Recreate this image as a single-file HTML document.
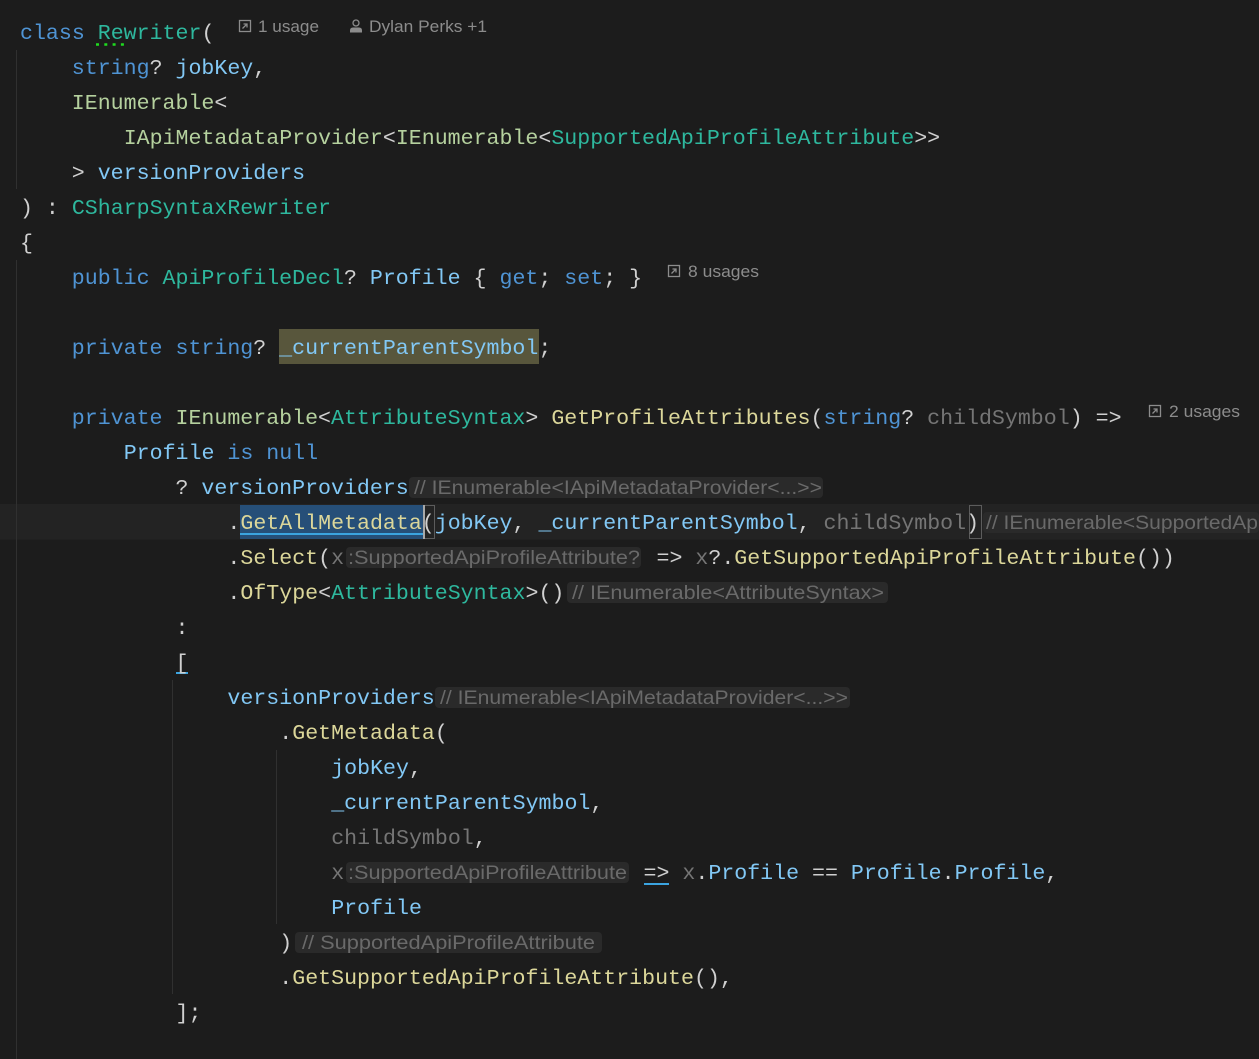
<!DOCTYPE html>
<html><head><meta charset="utf-8"><style>
html,body{margin:0;padding:0;background:#1c1c1c;width:1259px;height:1059px;overflow:hidden}
svg{display:block;position:absolute;left:0;top:0;filter:blur(.35px)}
.m{font-family:"Liberation Mono",monospace;font-size:21.6px;fill:#d0d0d0;white-space:pre;transform:translateY(-1.2px)}
.h{font-family:"Liberation Sans",sans-serif;font-size:19.5px;fill:#6a6a6a;white-space:pre}
.c{font-family:"Liberation Sans",sans-serif;font-size:17px;fill:#8c8c8c;white-space:pre}
.k{fill:#4f94d4}.t{fill:#2eb89e}.i{fill:#b5d19e}.p{fill:#82c8f5}.f{fill:#dcd79a}.d{fill:#757575}.w{fill:#d0d0d0}
.b{fill:#2a2a2a}.g{stroke:#303030;stroke-width:1}
</style></head><body>
<svg width="1259" height="1059" viewBox="0 0 1259 1059" xmlns="http://www.w3.org/2000/svg">
<rect width="1259" height="1059" fill="#1c1c1c"/>
<rect x="0" y="504" width="1259" height="35.500" fill="#232323"/>
<rect x="279" y="329" width="260" height="35" fill="#58563c"/>
<rect x="240" y="505" width="183" height="34" fill="#264f78"/>
<rect x="240" y="533" width="183" height="2" fill="#3ba4e0"/>
<rect x="423.500" y="505.500" width="11" height="33" fill="none" stroke="#5c5c5c"/>
<rect x="423" y="505" width="2" height="34" fill="#a8a8a8"/>
<rect x="969.500" y="505.500" width="12" height="33" fill="none" stroke="#5c5c5c"/>
<line class="g" x1="16.500" y1="50" x2="16.500" y2="189"/>
<line class="g" x1="16.500" y1="260" x2="16.500" y2="1059"/>
<line class="g" x1="172.500" y1="680" x2="172.500" y2="994"/>
<line class="g" x1="276.500" y1="750" x2="276.500" y2="924"/>
<rect class="b" x="409" y="477" width="414" height="21" rx="4"/>
<rect class="b" x="983" y="512" width="276" height="21" rx="4"/>
<rect class="b" x="346" y="547" width="295" height="21" rx="4"/>
<rect class="b" x="567" y="582" width="321" height="21" rx="4"/>
<rect class="b" x="435" y="687" width="415" height="21" rx="4"/>
<rect class="b" x="346" y="862" width="283" height="21" rx="4"/>
<rect class="b" x="295" y="932" width="307" height="21" rx="4"/>
<rect x="176" y="672" width="12" height="2" fill="#3ba4e0"/>
<rect x="644" y="883" width="25" height="2" fill="#3ba4e0"/>
<line x1="96" y1="44.500" x2="125" y2="44.500" stroke="#1fdc1f" stroke-width="2.500" stroke-dasharray="3 5.300"/>

<text class="m" x="20" y="40"><tspan class="k">class</tspan> <tspan class="t">Rewriter</tspan>(</text>
<text class="m" x="71.800" y="75"><tspan class="k">string</tspan>? <tspan class="p">jobKey</tspan>,</text>
<text class="m" x="71.800" y="110"><tspan class="i">IEnumerable</tspan>&lt;</text>
<text class="m" x="123.700" y="145"><tspan class="i">IApiMetadataProvider</tspan>&lt;<tspan class="i">IEnumerable</tspan>&lt;<tspan class="t">SupportedApiProfileAttribute</tspan>&gt;&gt;</text>
<text class="m" x="71.800" y="180">&gt; <tspan class="p">versionProviders</tspan></text>
<text class="m" x="20" y="215">) : <tspan class="t">CSharpSyntaxRewriter</tspan></text>
<text class="m" x="20" y="250">{</text>
<text class="m" x="71.800" y="285"><tspan class="k">public</tspan> <tspan class="t">ApiProfileDecl</tspan>? <tspan class="p">Profile</tspan> { <tspan class="k">get</tspan>; <tspan class="k">set</tspan>; }</text>
<text class="m" x="71.800" y="355"><tspan class="k">private</tspan> <tspan class="k">string</tspan>? <tspan class="p">_currentParentSymbol</tspan>;</text>
<text class="m" x="71.800" y="425"><tspan class="k">private</tspan> <tspan class="i">IEnumerable</tspan>&lt;<tspan class="t">AttributeSyntax</tspan>&gt; <tspan class="f">GetProfileAttributes</tspan>(<tspan class="k">string</tspan>? <tspan class="d">childSymbol</tspan>) =&gt;</text>
<text class="m" x="123.700" y="460"><tspan class="p">Profile</tspan> <tspan class="k">is</tspan> <tspan class="k">null</tspan></text>
<text class="m" x="175.500" y="495">? <tspan class="p">versionProviders</tspan></text>
<text class="m" x="227.400" y="530">.<tspan class="f">GetAllMetadata</tspan>(<tspan class="p">jobKey</tspan>, <tspan class="p">_currentParentSymbol</tspan>, <tspan class="d">childSymbol</tspan>)</text>
<text class="m" x="227.400" y="565">.<tspan class="f">Select</tspan>(<tspan class="d">x</tspan></text>
<text class="m" x="656.500" y="565">=&gt; <tspan class="d">x</tspan>?.<tspan class="f">GetSupportedApiProfileAttribute</tspan>())</text>
<text class="m" x="227.400" y="600">.<tspan class="f">OfType</tspan>&lt;<tspan class="t">AttributeSyntax</tspan>&gt;()</text>
<text class="m" x="175.500" y="635">:</text>
<text class="m" x="175.500" y="670">[</text>
<text class="m" x="227.400" y="705"><tspan class="p">versionProviders</tspan></text>
<text class="m" x="279.300" y="740">.<tspan class="f">GetMetadata</tspan>(</text>
<text class="m" x="331.200" y="775"><tspan class="p">jobKey</tspan>,</text>
<text class="m" x="331.200" y="810"><tspan class="p">_currentParentSymbol</tspan>,</text>
<text class="m" x="331.200" y="845"><tspan class="d">childSymbol</tspan>,</text>
<text class="m" x="331.200" y="880"><tspan class="d">x</tspan></text>
<text class="m" x="643.500" y="880">=&gt; <tspan class="d">x</tspan>.<tspan class="p">Profile</tspan> == <tspan class="p">Profile</tspan>.<tspan class="p">Profile</tspan>,</text>
<text class="m" x="331.200" y="915"><tspan class="p">Profile</tspan></text>
<text class="m" x="279.300" y="950">)</text>
<text class="m" x="279.300" y="985">.<tspan class="f">GetSupportedApiProfileAttribute</tspan>(),</text>
<text class="m" x="175.500" y="1020">];</text>

<text class="h" x="414" y="494" textLength="408" lengthAdjust="spacingAndGlyphs">// IEnumerable&lt;IApiMetadataProvider&lt;...&gt;&gt;</text>
<text class="h" x="986" y="529" textLength="272" lengthAdjust="spacingAndGlyphs">// IEnumerable&lt;SupportedAp</text>
<text class="h" x="348" y="564" textLength="292" lengthAdjust="spacingAndGlyphs">:SupportedApiProfileAttribute?</text>
<text class="h" x="572" y="599" textLength="312" lengthAdjust="spacingAndGlyphs">// IEnumerable&lt;AttributeSyntax&gt;</text>
<text class="h" x="440" y="704" textLength="408" lengthAdjust="spacingAndGlyphs">// IEnumerable&lt;IApiMetadataProvider&lt;...&gt;&gt;</text>
<text class="h" x="348" y="879" textLength="279" lengthAdjust="spacingAndGlyphs">:SupportedApiProfileAttribute</text>
<text class="h" x="302" y="949" textLength="293" lengthAdjust="spacingAndGlyphs">// SupportedApiProfileAttribute</text>

<g fill="none" stroke="#8c8c8c" stroke-width="1.300">
<rect x="239.500" y="20.500" width="11" height="11"/><path d="M242.500 28.500L247 24M243.500 24H247V27.500"/>
<rect x="668.500" y="265.500" width="11" height="11"/><path d="M671.500 273.500L676 269M672.500 269H676V272.500"/>
<rect x="1149.500" y="405.500" width="11" height="11"/><path d="M1152.500 413.500L1157 409M1153.500 409H1157V412.500"/>
<circle cx="356" cy="23" r="3"/>
</g>
<path d="M350 32.500V30.500Q350 27.500 353 27.500H359Q362 27.500 362 30.500V32.500Z" fill="#8c8c8c"/>
<text class="c" x="258" y="32" textLength="61" lengthAdjust="spacingAndGlyphs">1 usage</text>
<text class="c" x="369" y="32" textLength="118" lengthAdjust="spacingAndGlyphs">Dylan Perks +1</text>
<text class="c" x="688" y="277" textLength="71" lengthAdjust="spacingAndGlyphs">8 usages</text>
<text class="c" x="1169" y="417" textLength="71" lengthAdjust="spacingAndGlyphs">2 usages</text>
</svg>
</body></html>
